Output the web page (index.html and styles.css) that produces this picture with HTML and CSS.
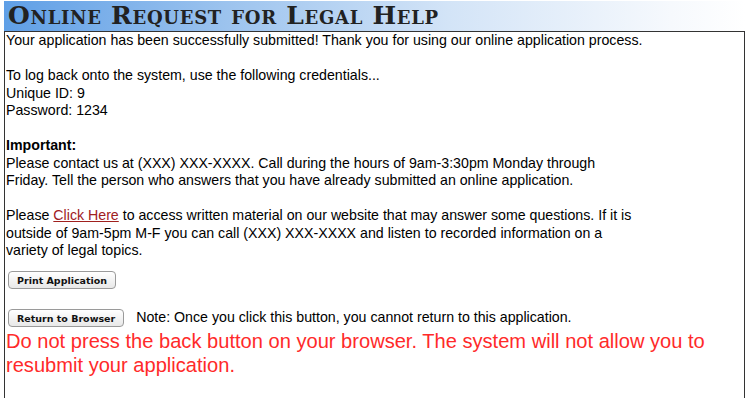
FILE: index.html
```html
<!DOCTYPE html>
<html lang="en">
<head>
  <meta charset="UTF-8" />
  <title>Online Request for Legal Help</title>
  <link rel="stylesheet" href="styles.css">
</head>
<body>
  <div class="header">Online Request for Legal Help</div>

  <div class="content">
    <p>Your application has been successfully submitted! Thank you for using our online application process.</p>

    <p>To log back onto the system, use the following credentials...<br>
    Unique ID: 9<br>
    Password: 1234</p>

    <p><b>Important:</b><br>
    Please contact us at (XXX) XXX-XXXX. Call during the hours of 9am-3:30pm Monday through<br>
    Friday. Tell the person who answers that you have already submitted an online application.</p>

    <p>Please <a href="#">Click Here</a> to access written material on our website that may answer some questions. If it is<br>
    outside of 9am-5pm M-F you can call (XXX) XXX-XXXX and listen to recorded information on a<br>
    variety of legal topics.</p>

    <div class="row">
      <button class="button">Print Application</button>
    </div>

    <div class="row">
      <button class="button">Return to Browser</button>
      <span class="note">Note: Once you click this button, you cannot return to this application.</span>
    </div>

    <div class="warning">Do not press the back button on your browser. The system will not allow you to resubmit your application.</div>
  </div>
</body>
</html>
```

FILE: styles.css
```css
html, body {
  height: 100%;
}

body {
  margin: 0;
  padding: 1px 5px 0 4px;
  box-sizing: border-box;
  display: flex;
  flex-direction: column;
  font-family: "Liberation Sans", Arial, sans-serif;
  font-size: 14.2px;
  color: #000;
  background-color: #ffffff;
  overflow: hidden;
}

.header {
  height: 30px;
  padding-left: 4px;
  background: linear-gradient(to right, #5f9fe6 0%, #9cc3ee 30%, #d3e4f7 60%, #f6f9fd 90%, #ffffff 100%);
  font-family: "DejaVu Serif", serif;
  font-variant: small-caps;
  font-weight: bold;
  font-size: 25px;
  line-height: 30px;
  color: #222;
  letter-spacing: 0.7px;
}

.content {
  flex-grow: 1;
  border: 1px solid #333;
  border-bottom: none;
  padding: 0 0 0 1px;
  line-height: 17.5px;
}

.content p {
  margin: 0 0 17.5px 0;
}

.content a {
  color: #a0201e;
}

.row {
  display: flex;
  align-items: center;
  margin-top: -6px;
}

.row + .row {
  margin-top: 20px;
}

.button {
  font-family: "DejaVu Sans", sans-serif;
  font-weight: bold;
  font-size: 9.5px;
  height: 18px;
  padding: 0 8px;
  margin-left: 2px;
  border: 1px solid #9a9a9a;
  border-radius: 4px;
  background: linear-gradient(#ffffff, #e8e8e8);
  color: #111;
}

.note {
  margin-left: 12px;
}

.warning {
  color: #ff2a2a;
  font-size: 20.1px;
  line-height: 24px;
  margin-top: 2px;
}
```
